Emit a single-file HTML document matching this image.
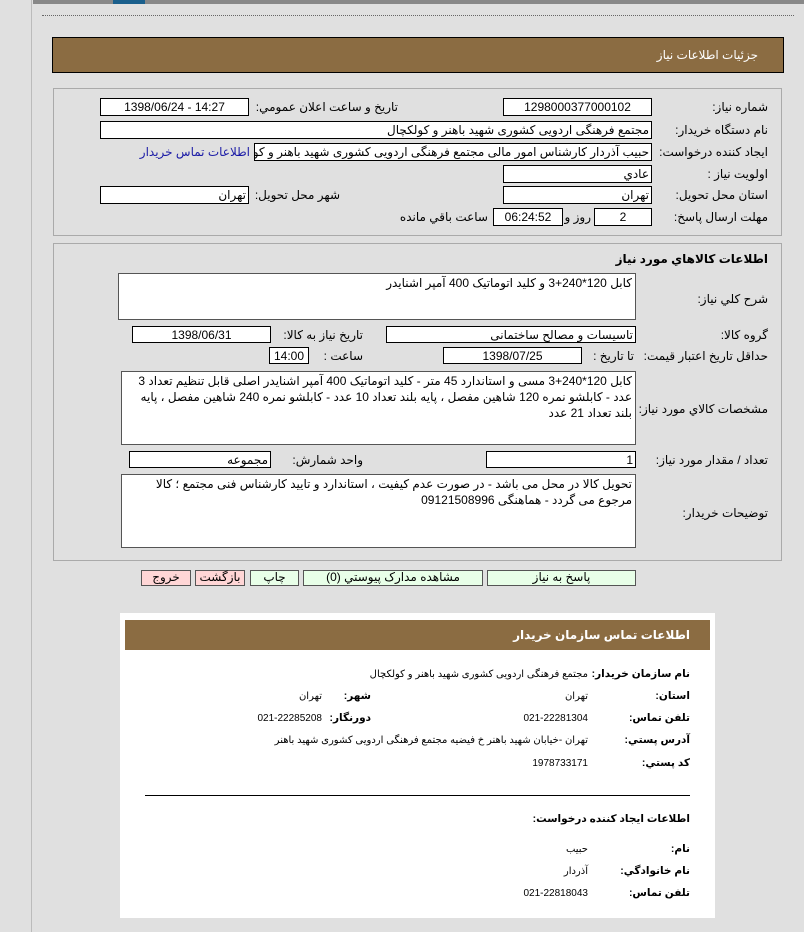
<!DOCTYPE html>
<html><head><meta charset="utf-8"><style>
*{margin:0;padding:0;box-sizing:border-box}
body{width:804px;height:932px;background:#e0e0e0;position:relative;overflow:hidden;font-family:"Liberation Sans","DejaVu Sans",sans-serif;font-size:12px;color:#000}
.a{position:absolute;white-space:nowrap}
.l{position:absolute;white-space:nowrap;direction:rtl;text-align:right}
.i{position:absolute;background:#fff;border:1px solid #000;direction:rtl;text-align:right;padding:0 2px;font-size:12px;line-height:16px;white-space:nowrap;overflow:hidden}
.c{text-align:center}
.t{position:absolute;background:#fff;border:1px solid #555;direction:rtl;text-align:right;padding:1px 3px;font-size:12px;line-height:16px;white-space:normal}
.b{position:absolute;border:1px solid #555;background:#e8ffe8;text-align:center;font-size:12px;line-height:13px;height:16px;direction:rtl}
.p{background:#ffd6d6}
.s{font-size:10px}
.bl{font-weight:bold;font-size:10.5px}
</style></head><body>
<div class="a" style="left:0;top:0;width:32px;height:932px;border-right:1px solid #bbb;background:#e0e0e0"></div>
<div class="a" style="left:33px;top:0;width:771px;height:4px;background:#888"></div>
<div class="a" style="left:113px;top:0;width:32px;height:4px;background:#1a5f8c"></div>
<div class="a" style="left:42px;top:15px;width:752px;border-top:1px dotted #666"></div>

<div class="a" style="left:52px;top:37px;width:732px;height:36px;background:#8b6c42;border:1px solid #000"></div>
<div class="l" style="right:46px;top:48px;color:#fff;font-size:12px">جزئيات اطلاعات نياز</div>

<div class="a" style="left:53px;top:88px;width:729px;height:148px;border:1px solid #aaa"></div>
<div class="l" style="right:36px;top:100px">شماره نياز:</div>
<div class="i c" style="left:503px;top:98px;width:149px;height:18px">1298000377000102</div>
<div class="l" style="right:406px;top:100px">تاريخ و ساعت اعلان عمومي:</div>
<div class="i c" style="left:100px;top:98px;width:149px;height:18px;direction:ltr">1398/06/24 - 14:27</div>
<div class="l" style="right:36px;top:123px">نام دستگاه خريدار:</div>
<div class="i" style="left:100px;top:121px;width:552px;height:18px">مجتمع فرهنگی اردویی کشوری شهید باهنر و کولکچال</div>
<div class="l" style="right:36px;top:145px">ايجاد کننده درخواست:</div>
<div class="i" style="left:254px;top:143px;width:398px;height:18px">حبیب آذردار کارشناس امور مالی  مجتمع فرهنگی اردویی کشوری شهید باهنر و کولکچال</div>
<div class="l" style="right:554px;top:145px;color:#1a1aa6">اطلاعات تماس خريدار</div>
<div class="l" style="right:36px;top:167px">اولويت نياز :</div>
<div class="i" style="left:503px;top:165px;width:149px;height:18px">عادي</div>
<div class="l" style="right:36px;top:188px">استان محل تحويل:</div>
<div class="i" style="left:503px;top:186px;width:149px;height:18px">تهران</div>
<div class="l" style="right:464px;top:188px">شهر محل تحويل:</div>
<div class="i" style="left:100px;top:186px;width:149px;height:18px">تهران</div>
<div class="l" style="right:36px;top:210px">مهلت ارسال پاسخ:</div>
<div class="i c" style="left:594px;top:208px;width:58px;height:18px">2</div>
<div class="l" style="right:213px;top:210px">روز و</div>
<div class="i c" style="left:493px;top:208px;width:70px;height:18px">06:24:52</div>
<div class="l" style="right:316px;top:210px">ساعت باقي مانده</div>

<div class="a" style="left:53px;top:243px;width:729px;height:318px;border:1px solid #aaa"></div>
<div class="l" style="right:36px;top:252px;font-weight:bold">اطلاعات كالاهاي مورد نياز</div>
<div class="l" style="right:36px;top:292px">شرح كلي نياز:</div>
<div class="t" style="left:118px;top:273px;width:518px;height:47px">کابل 120*240+3 و کلید اتوماتیک 400 آمپر اشنایدر</div>
<div class="l" style="right:36px;top:328px">گروه كالا:</div>
<div class="i" style="left:386px;top:326px;width:250px;height:17px">تاسیسات و مصالح ساختمانی</div>
<div class="l" style="right:441px;top:328px">تاريخ نياز به كالا:</div>
<div class="i c" style="left:132px;top:326px;width:139px;height:17px">1398/06/31</div>
<div class="l" style="right:36px;top:349px">حداقل تاريخ اعتبار قيمت:</div>
<div class="l" style="right:170px;top:349px">تا تاريخ :</div>
<div class="i c" style="left:443px;top:347px;width:139px;height:17px">1398/07/25</div>
<div class="l" style="right:441px;top:349px">ساعت :</div>
<div class="i c" style="left:269px;top:347px;width:40px;height:17px">14:00</div>
<div class="l" style="right:36px;top:402px">مشخصات كالاي مورد نياز:</div>
<div class="t" style="left:121px;top:371px;width:515px;height:74px">کابل 120*240+3  مسی و استاندارد 45 متر - کلید اتوماتیک 400 آمپر اشنایدر اصلی قابل تنظیم تعداد 3 عدد - کابلشو نمره 120 شاهین مفصل ، پایه بلند تعداد 10 عدد - کابلشو نمره 240 شاهین مفصل ، پایه بلند تعداد 21 عدد</div>
<div class="l" style="right:36px;top:453px">تعداد / مقدار مورد نياز:</div>
<div class="i" style="left:486px;top:451px;width:150px;height:17px">1</div>
<div class="l" style="right:441px;top:453px">واحد شمارش:</div>
<div class="i" style="left:129px;top:451px;width:142px;height:17px">مجموعه</div>
<div class="l" style="right:36px;top:506px">توضيحات خريدار:</div>
<div class="t" style="left:121px;top:474px;width:515px;height:74px">تحویل کالا در محل می باشد - در صورت عدم کیفیت ، استاندارد و تایید کارشناس فنی مجتمع ؛ کالا مرجوع می گردد - هماهنگی 09121508996</div>

<div class="b" style="left:487px;top:570px;width:149px">پاسخ به نياز</div>
<div class="b" style="left:303px;top:570px;width:180px">مشاهده مدارک پيوستي (0)</div>
<div class="b" style="left:250px;top:570px;width:49px">چاپ</div>
<div class="b p" style="left:195px;top:570px;width:50px">بازگشت</div>
<div class="b p" style="left:141px;top:570px;width:50px">خروج</div>

<div class="a" style="left:120px;top:613px;width:595px;height:305px;background:#fff"></div>
<div class="a" style="left:125px;top:620px;width:585px;height:30px;background:#8b6c42"></div>
<div class="l bl" style="right:114px;top:628px;color:#fff;font-size:12px">اطلاعات تماس سازمان خريدار</div>
<div class="l bl" style="right:114px;top:668px">نام سازمان خريدار:</div>
<div class="l s" style="right:216px;top:669px">مجتمع فرهنگی اردویی کشوری شهید باهنر و کولکچال</div>
<div class="l bl" style="right:114px;top:690px">استان:</div>
<div class="l s" style="right:216px;top:691px">تهران</div>
<div class="l bl" style="right:433px;top:690px">شهر:</div>
<div class="l s" style="right:482px;top:691px">تهران</div>
<div class="l bl" style="right:114px;top:712px">تلفن تماس:</div>
<div class="l s" style="right:216px;top:713px">021-22281304</div>
<div class="l bl" style="right:433px;top:712px">دورنگار:</div>
<div class="l s" style="right:482px;top:713px">021-22285208</div>
<div class="l bl" style="right:114px;top:734px">آدرس پستي:</div>
<div class="l s" style="right:216px;top:735px">تهران -خیابان شهید باهنر خ فیضیه مجتمع فرهنگی اردویی کشوری شهید باهنر</div>
<div class="l bl" style="right:114px;top:757px">کد پستي:</div>
<div class="l s" style="right:216px;top:758px">1978733171</div>
<div class="a" style="left:145px;top:795px;width:545px;border-top:1px solid #000"></div>
<div class="l bl" style="right:114px;top:813px">اطلاعات ايجاد كننده درخواست:</div>
<div class="l bl" style="right:114px;top:843px">نام:</div>
<div class="l s" style="right:216px;top:844px">حبیب</div>
<div class="l bl" style="right:114px;top:865px">نام خانوادگي:</div>
<div class="l s" style="right:216px;top:866px">آذردار</div>
<div class="l bl" style="right:114px;top:887px">تلفن تماس:</div>
<div class="l s" style="right:216px;top:888px">021-22818043</div>
</body></html>
